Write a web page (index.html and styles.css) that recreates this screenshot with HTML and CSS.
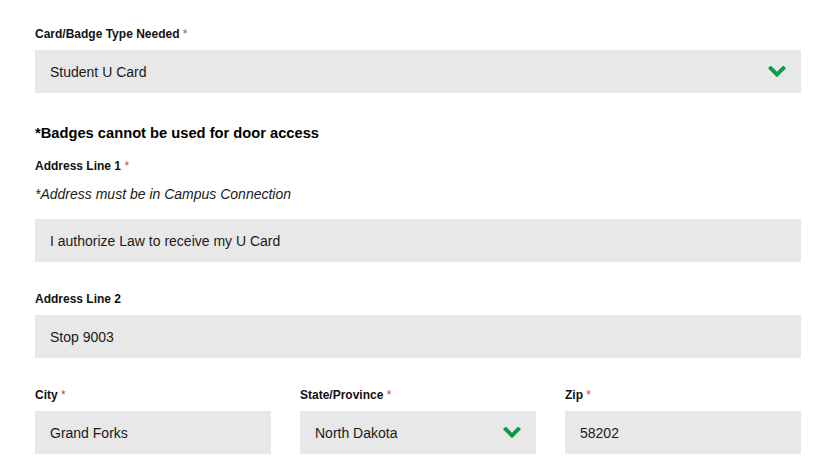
FILE: index.html
```html
<!DOCTYPE html>
<html>
<head lang="en">
  <meta charset="UTF-8">
  <title>U Card Request</title>
  <link rel="stylesheet" href="styles.css">
</head>
<body>
<form class="form">
  <div class="field">
    <label class="label">Card/Badge Type Needed <span class="req">*</span></label>
    <div class="box select">
      <span>Student U Card</span>
      <svg class="chev" viewBox="90 553 1612 1015"><path d="M1683 808l-742 741q-19 19-45 19t-45-19l-742-741q-19-19-19-45.5t19-45.5l166-165q19-19 45-19t45 19l531 531 531-531q19-19 45-19t45 19l166 165q19 19 19 45.5t-19 45.5z"/></svg>
    </div>
  </div>

  <p class="notice">*Badges cannot be used for door access</p>

  <div class="field">
    <label class="label">Address Line 1 <span class="req">*</span></label>
    <p class="hint">*Address must be in Campus Connection</p>
    <div class="box">I authorize Law to receive my U Card</div>
  </div>

  <div class="field">
    <label class="label">Address Line 2</label>
    <div class="box">Stop 9003</div>
  </div>

  <div class="row">
    <div class="field">
      <label class="label">City <span class="req">*</span></label>
      <div class="box">Grand Forks</div>
    </div>
    <div class="field">
      <label class="label">State/Province <span class="req">*</span></label>
      <div class="box select">
        <span>North Dakota</span>
        <svg class="chev" viewBox="90 553 1612 1015"><path d="M1683 808l-742 741q-19 19-45 19t-45-19l-742-741q-19-19-19-45.5t19-45.5l166-165q19-19 45-19t45 19l531 531 531-531q19-19 45-19t45 19l166 165q19 19 19 45.5t-19 45.5z"/></svg>
      </div>
    </div>
    <div class="field">
      <label class="label">Zip <span class="req">*</span></label>
      <div class="box">58202</div>
    </div>
  </div>
</form>
</body>
</html>
```

FILE: styles.css
```css
* {
  margin: 0;
  padding: 0;
  box-sizing: border-box;
}

body {
  background: #fff;
  color: #1a1a1a;
  font-family: "Liberation Sans", Arial, sans-serif;
  font-size: 14px;
}

.form {
  padding: 25px 14px 0 35px;
}

.field {
  margin-bottom: 28px;
}

.label {
  display: block;
  font-size: 12px;
  font-weight: bold;
  line-height: 18px;
  color: #111;
  margin-bottom: 7px;
}

.req {
  color: #c9474a;
  font-weight: normal;
}

.box {
  height: 43px;
  background: #e8e8e8;
  padding: 0 15px;
  display: flex;
  align-items: center;
  line-height: 20px;
}

.select {
  justify-content: space-between;
}

.chev {
  width: 18px;
  height: 11px;
  fill: #0d9a48;
}

.notice {
  font-size: 14.7px;
  font-weight: bold;
  line-height: 20px;
  color: #000;
  margin: 30px 0 14px;
}

.hint {
  font-style: italic;
  line-height: 20px;
  margin: 9px 0 15px;
}

.row {
  display: grid;
  grid-template-columns: repeat(3, 1fr);
  gap: 29px;
}
```
